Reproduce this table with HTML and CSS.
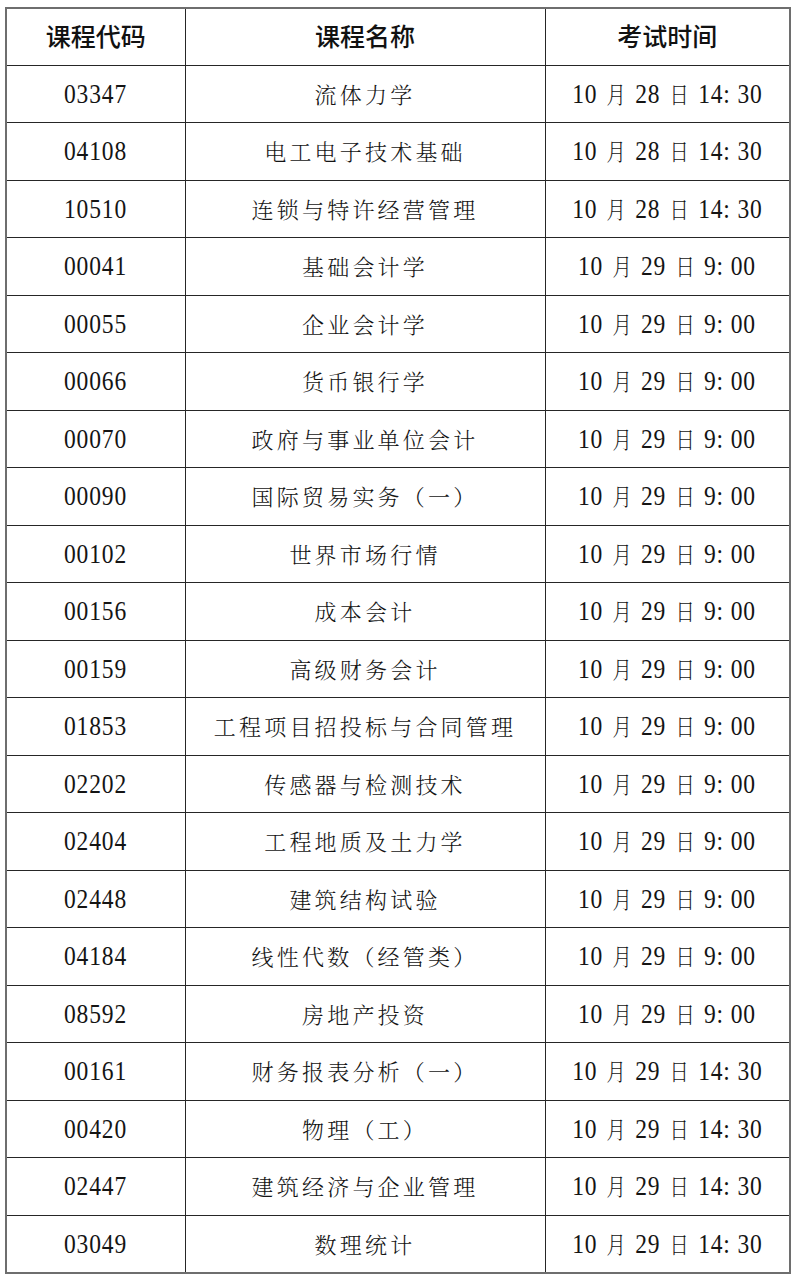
FILE: index.html
```html
<!DOCTYPE html>
<html lang="zh-CN">
<head>
<meta charset="utf-8">
<link rel="stylesheet" href="styles.css">
</head>
<body>
<table class="schedule">
  <colgroup><col class="c-code"><col class="c-name"><col class="c-time"></colgroup>
  <thead>
    <tr><th>课程代码</th><th>课程名称</th><th>考试时间</th></tr>
  </thead>
  <tbody>
    <tr><td class="code"><span>03347</span></td><td class="name">流体力学</td><td class="time"><span>10 <i>月</i> 28 <i>日</i> 14: 30</span></td></tr>
    <tr><td class="code"><span>04108</span></td><td class="name">电工电子技术基础</td><td class="time"><span>10 <i>月</i> 28 <i>日</i> 14: 30</span></td></tr>
    <tr><td class="code"><span>10510</span></td><td class="name">连锁与特许经营管理</td><td class="time"><span>10 <i>月</i> 28 <i>日</i> 14: 30</span></td></tr>
    <tr><td class="code"><span>00041</span></td><td class="name">基础会计学</td><td class="time"><span>10 <i>月</i> 29 <i>日</i> 9: 00</span></td></tr>
    <tr><td class="code"><span>00055</span></td><td class="name">企业会计学</td><td class="time"><span>10 <i>月</i> 29 <i>日</i> 9: 00</span></td></tr>
    <tr><td class="code"><span>00066</span></td><td class="name">货币银行学</td><td class="time"><span>10 <i>月</i> 29 <i>日</i> 9: 00</span></td></tr>
    <tr><td class="code"><span>00070</span></td><td class="name">政府与事业单位会计</td><td class="time"><span>10 <i>月</i> 29 <i>日</i> 9: 00</span></td></tr>
    <tr><td class="code"><span>00090</span></td><td class="name">国际贸易实务（一）</td><td class="time"><span>10 <i>月</i> 29 <i>日</i> 9: 00</span></td></tr>
    <tr><td class="code"><span>00102</span></td><td class="name">世界市场行情</td><td class="time"><span>10 <i>月</i> 29 <i>日</i> 9: 00</span></td></tr>
    <tr><td class="code"><span>00156</span></td><td class="name">成本会计</td><td class="time"><span>10 <i>月</i> 29 <i>日</i> 9: 00</span></td></tr>
    <tr><td class="code"><span>00159</span></td><td class="name">高级财务会计</td><td class="time"><span>10 <i>月</i> 29 <i>日</i> 9: 00</span></td></tr>
    <tr><td class="code"><span>01853</span></td><td class="name">工程项目招投标与合同管理</td><td class="time"><span>10 <i>月</i> 29 <i>日</i> 9: 00</span></td></tr>
    <tr><td class="code"><span>02202</span></td><td class="name">传感器与检测技术</td><td class="time"><span>10 <i>月</i> 29 <i>日</i> 9: 00</span></td></tr>
    <tr><td class="code"><span>02404</span></td><td class="name">工程地质及土力学</td><td class="time"><span>10 <i>月</i> 29 <i>日</i> 9: 00</span></td></tr>
    <tr><td class="code"><span>02448</span></td><td class="name">建筑结构试验</td><td class="time"><span>10 <i>月</i> 29 <i>日</i> 9: 00</span></td></tr>
    <tr><td class="code"><span>04184</span></td><td class="name">线性代数（经管类）</td><td class="time"><span>10 <i>月</i> 29 <i>日</i> 9: 00</span></td></tr>
    <tr><td class="code"><span>08592</span></td><td class="name">房地产投资</td><td class="time"><span>10 <i>月</i> 29 <i>日</i> 9: 00</span></td></tr>
    <tr><td class="code"><span>00161</span></td><td class="name">财务报表分析（一）</td><td class="time"><span>10 <i>月</i> 29 <i>日</i> 14: 30</span></td></tr>
    <tr><td class="code"><span>00420</span></td><td class="name">物理（工）</td><td class="time"><span>10 <i>月</i> 29 <i>日</i> 14: 30</span></td></tr>
    <tr><td class="code"><span>02447</span></td><td class="name">建筑经济与企业管理</td><td class="time"><span>10 <i>月</i> 29 <i>日</i> 14: 30</span></td></tr>
    <tr><td class="code"><span>03049</span></td><td class="name">数理统计</td><td class="time"><span>10 <i>月</i> 29 <i>日</i> 14: 30</span></td></tr>
  </tbody>
</table>
</body>
</html>
```
FILE: styles.css
```css
html, body {
  margin: 0;
  padding: 0;
  background: #ffffff;
}
body {
  padding: 7px 0 0 5px;
  font-family: "Liberation Serif", "Noto Sans CJK SC", serif;
  color: #141414;
}
.schedule {
  border-collapse: collapse;
  table-layout: fixed;
  width: 784px;
  border: 2px solid #6e6e6e;
}
.c-code { width: 179px; }
.c-name { width: 360px; }
.c-time { width: 245px; }
.schedule th,
.schedule td {
  border: 1.5px solid #262626;
  text-align: center;
  vertical-align: middle;
  padding: 0;
  line-height: 1;
  white-space: nowrap;
}
.schedule thead tr { height: 57px; }
.schedule tbody tr { height: 57.5px; }
.schedule th {
  font-family: "Noto Sans CJK SC", sans-serif;
  font-weight: 500;
  font-size: 25px;
  color: #111;
  padding-bottom: 2px;
}
.code span,
.time span {
  display: inline-block;
  transform: scaleX(0.84);
  transform-origin: center;
}
.code {
  font-family: "Liberation Serif", serif;
  font-size: 28px;
  letter-spacing: 1px;
  padding-top: 2px;
}
.name {
  font-family: "Noto Serif CJK SC", "Noto Sans CJK SC", serif;
  font-weight: 300;
  font-size: 22px;
  letter-spacing: 3.2px;
}
.time {
  font-family: "Liberation Serif", "Noto Sans CJK SC", serif;
  font-size: 28px;
  letter-spacing: 1px;
  padding-top: 2px;
}
.time i {
  font-style: normal;
  font-family: "Noto Serif CJK SC", "Noto Sans CJK SC", serif;
  font-weight: 300;
  font-size: 23px;
  letter-spacing: 0;
  margin: 0 3px;
}
```
